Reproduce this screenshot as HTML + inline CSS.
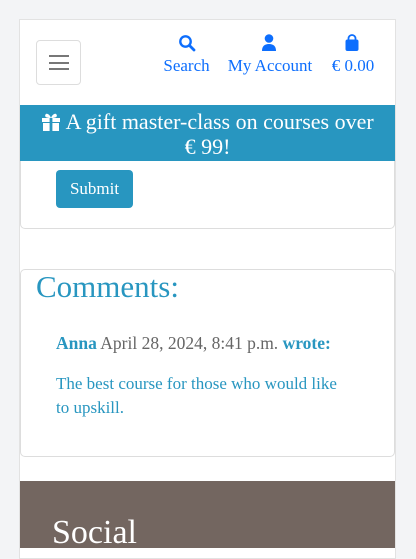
<!DOCTYPE html>
<html><head><style>
*{box-sizing:border-box;margin:0;padding:0}
body{width:416px;height:548px;overflow:hidden;background:#f3f4f6;font-family:"Liberation Serif",serif;position:relative}
.wrap{position:absolute;left:19px;top:19px;width:377px;height:540px;background:#fff;border:1px solid #e2e2e2}
.abs{position:absolute}
.nav{color:#0d6efd;font-size:17px;text-align:center;white-space:nowrap}
</style></head><body>
<div class="wrap"></div>
<div class="abs" style="left:36px;top:40px;width:45px;height:45px;border:1px solid #ddd;border-radius:4px">
 <div class="abs" style="left:12px;top:14px;width:20px;height:2px;background:#777"></div>
 <div class="abs" style="left:12px;top:20.5px;width:20px;height:2px;background:#777"></div>
 <div class="abs" style="left:12px;top:27px;width:20px;height:2px;background:#777"></div>
</div>
<svg class="abs" style="left:178px;top:34px" width="18" height="18" viewBox="0 0 18 18"><circle cx="7.5" cy="7.5" r="5.2" fill="none" stroke="#0d6efd" stroke-width="2.4"/><path d="M11.5 11.5 L16 16" stroke="#0d6efd" stroke-width="2.8" stroke-linecap="round"/></svg>
<svg class="abs" style="left:261px;top:34px" width="16" height="18" viewBox="0 0 16 18"><circle cx="8" cy="4.5" r="4.3" fill="#0d6efd"/><path d="M1 17 Q1 10 8 10 Q15 10 15 17 Z" fill="#0d6efd"/></svg>
<svg class="abs" style="left:344px;top:34px" width="16" height="18" viewBox="0 0 16 18"><path d="M4.5 6 V4.5 A3.5 3.5 0 0 1 11.5 4.5 V6" fill="none" stroke="#0d6efd" stroke-width="1.8"/><rect x="1.5" y="5.5" width="13" height="11.5" rx="2" fill="#0d6efd"/></svg>
<div class="abs nav" style="left:155px;top:56px;width:63px">Search</div>
<div class="abs nav" style="left:220px;top:56px;width:100px">My Account</div>
<div class="abs nav" style="left:322px;top:56px;width:62px">€ 0.00</div>
<div class="abs" style="left:20px;top:105px;width:375px;height:56px;background:#2896c0;color:#fff;font-size:22px;text-align:center;line-height:25px;padding-top:4px;font-family:'Liberation Serif',serif">
<svg width="20" height="19" viewBox="0 0 20 19" style="vertical-align:-2px"><rect x="1" y="6" width="18" height="4" fill="#fff"/><rect x="2" y="11" width="16" height="8" fill="#fff"/><rect x="8.6" y="6" width="2.8" height="13" fill="#2896c0"/><path d="M10 6 C6 6 3 5 4.5 2.5 C6 0.5 9 3 10 6 C11 3 14 0.5 15.5 2.5 C17 5 14 6 10 6Z" fill="#fff"/></svg> A gift master-class on courses over<br>€ 99!</div>
<div class="abs" style="left:20px;top:161px;width:375px;height:68px;border:1px solid #ddd;border-top:none;border-radius:0 0 5px 5px"></div>
<div class="abs" style="left:56px;top:170px;width:77px;height:38px;background:#2896c0;border-radius:4px;color:#fff;font-size:17px;text-align:center;line-height:38px">Submit</div>
<div class="abs" style="left:20px;top:269px;width:375px;height:188px;border:1px solid #ddd;border-radius:5px"></div>
<div class="abs" style="left:36px;top:269px;font-size:31px;color:#2896c0">Comments:</div>
<div class="abs" style="left:56px;top:333px;font-size:17.5px;color:#666;white-space:nowrap"><b style="color:#2896c0">Anna</b> April 28, 2024, 8:41 p.m. <b style="color:#2896c0">wrote:</b></div>
<div class="abs" style="left:56px;top:372px;width:300px;font-size:17px;color:#2896c0;line-height:24px">The best course for those who would like<br>to upskill.</div>
<div class="abs" style="left:20px;top:481px;width:375px;height:67px;background:#736660"></div>
<div class="abs" style="left:52px;top:514px;font-size:34px;color:#fff">Social</div>
</body></html>
